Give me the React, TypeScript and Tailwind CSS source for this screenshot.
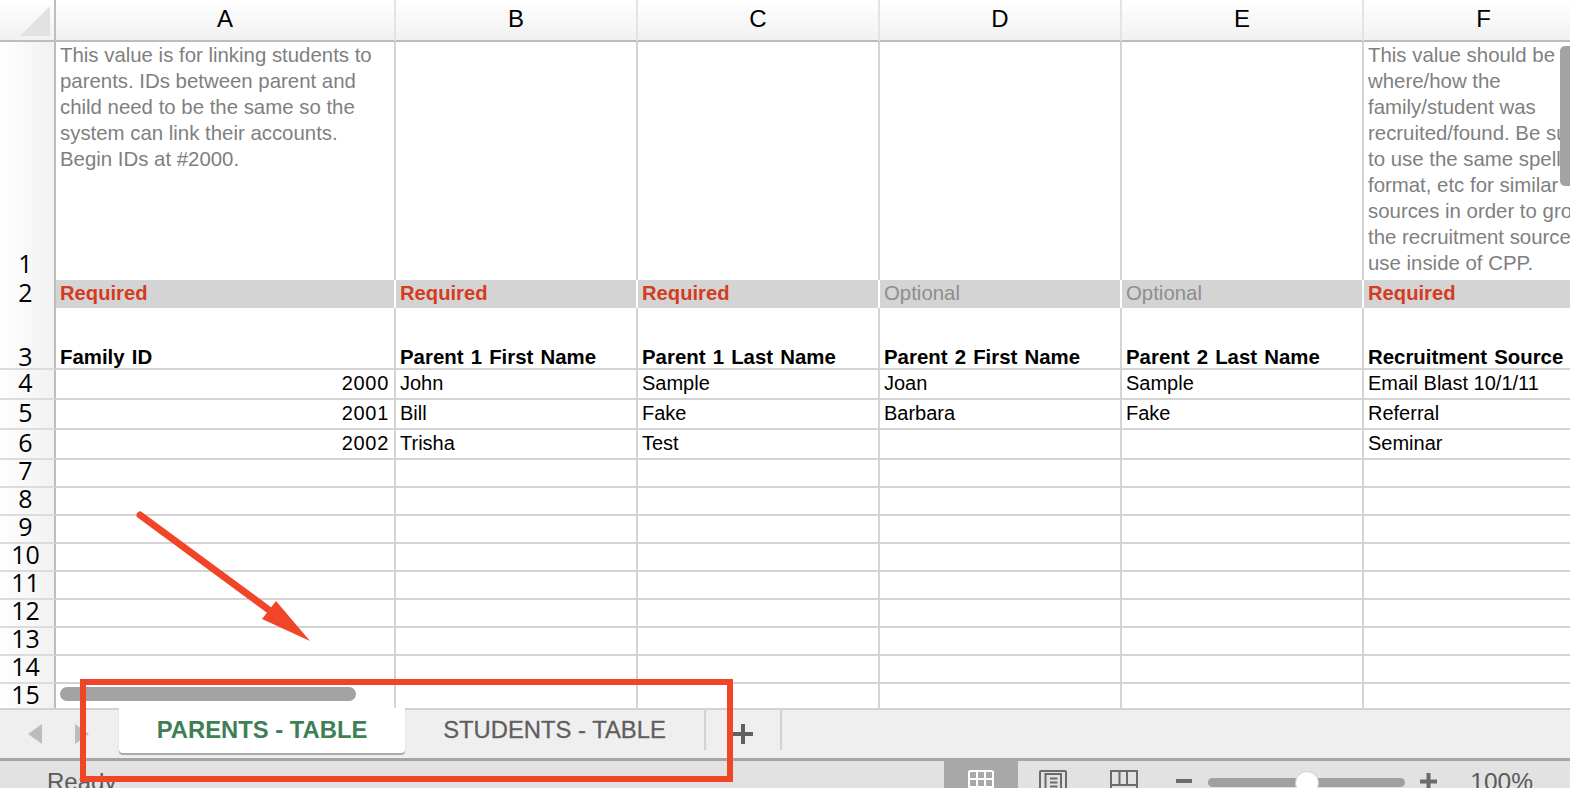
const sans = "font-['Liberation_Sans',Arial,sans-serif]";

const columns = ['A', 'B', 'C', 'D', 'E', 'F'];

const noteA = [
  'This value is for linking students to',
  'parents. IDs between parent and',
  'child need to be the same so the',
  'system can link their accounts.',
  'Begin IDs at #2000.',
];

const noteF = [
  'This value should be',
  'where/how the',
  'family/student was',
  'recruited/found. Be sure',
  'to use the same spelling,',
  'format, etc for similar',
  'sources in order to group',
  'the recruitment sources to',
  'use inside of CPP.',
];

const status = ['Required', 'Required', 'Required', 'Optional', 'Optional', 'Required'];
const titles = [
  'Family ID',
  'Parent 1 First Name',
  'Parent 1 Last Name',
  'Parent 2 First Name',
  'Parent 2 Last Name',
  'Recruitment Source',
];
const people = [
  ['2000', 'John', 'Sample', 'Joan', 'Sample', 'Email Blast 10/1/11'],
  ['2001', 'Bill', 'Fake', 'Barbara', 'Fake', 'Referral'],
  ['2002', 'Trisha', 'Test', '', '', 'Seminar'],
];
const emptyRows = [7, 8, 9, 10, 11, 12, 13, 14, 15];

function RowLabel({
  n,
  line = true,
  leading = 'leading-[32px]',
}: {
  n: number;
  line?: boolean;
  leading?: string;
}) {
  return (
    <div
      className={`flex items-end justify-center border-r-2 border-r-[#bdbdbd] bg-gradient-to-r from-white to-[#f1f1f1] font-['Open_Sans',sans-serif] text-[25px] text-black ${leading} ${
        line ? 'border-b-2 border-b-[#dcdcdc]' : ''
      }`}
    >
      <span className="pr-[3px]">{n}</span>
    </div>
  );
}

function Note({ lines }: { lines: string[] }) {
  return (
    <div className="overflow-hidden whitespace-nowrap border-r-2 border-r-[#d4d4d4] pl-1 text-[20.4px] leading-[26px] text-[#7f7f7f]">
      {lines.map((l) => (
        <div key={l}>{l}</div>
      ))}
    </div>
  );
}

function Sheet() {
  return (
    <div
      className={`relative grid min-h-0 flex-1 grid-cols-[56px_340px_242px_242px_242px_242px_241px] grid-rows-[42px_238px_28px_62px_30px_30px_30px_repeat(8,28px)_24px] overflow-hidden bg-white ${sans}`}
    >
      {/* header row */}
      <div className="flex items-start border-r-2 border-b-2 border-[#bdbdbd] bg-gradient-to-b from-white to-[#f1f1f1] pl-5 pt-1.5">
        <svg width="30" height="30" viewBox="0 0 30 30">
          <path d="M30 0V30H0Z" fill="#e2e2e2" />
        </svg>
      </div>
      {columns.map((c) => (
        <div
          key={c}
          className="flex items-center justify-center border-r-2 border-b-2 border-r-[#e4e4e4] border-b-[#bdbdbd] bg-gradient-to-b from-white to-[#f1f1f1] pb-[2px] text-[24px] text-black"
        >
          {c}
        </div>
      ))}

      {/* row 1 */}
      <RowLabel n={1} line={false} leading="leading-[34px]" />
      <Note lines={noteA} />
      <Note lines={[]} />
      <Note lines={[]} />
      <Note lines={[]} />
      <Note lines={[]} />
      <Note lines={noteF} />

      {/* row 2 */}
      <RowLabel n={2} line={false} />
      {status.map((s, i) => (
        <div
          key={i}
          className={`border-r-2 border-r-white bg-[#d4d4d4] pl-1 leading-[26px] ${
            s === 'Required' ? 'text-[20.2px] font-bold text-[#d43b1f]' : 'text-[20.4px] text-[#8e8e8e]'
          }`}
        >
          {s}
        </div>
      ))}

      {/* row 3 */}
      <RowLabel n={3} leading="leading-[24px]" />
      {titles.map((t) => (
        <div
          key={t}
          className="flex items-end whitespace-nowrap border-r-2 border-b-2 border-[#d4d4d4] pl-1 text-[20.4px] font-bold leading-[22px] text-black [word-spacing:1.5px]"
        >
          {t}
        </div>
      ))}

      {/* rows 4-6 */}
      {people.map((row, r) => (
        <div key={r} className="contents">
          <RowLabel n={r + 4} />
          {row.map((v, i) => (
            <div
              key={i}
              className={`whitespace-nowrap border-r-2 border-b-2 border-[#d4d4d4] text-[20px] leading-[26px] text-black ${
                i === 0 ? 'pr-[5px] text-right tracking-[0.7px]' : 'pl-1'
              }`}
            >
              {v}
            </div>
          ))}
        </div>
      ))}

      {/* empty rows */}
      {emptyRows.map((n) => (
        <div key={n} className="contents">
          <RowLabel n={n} line={n !== 15} leading={n === 15 ? 'leading-[28px]' : 'leading-[32px]'} />
          {columns.map((c) => (
            <div
              key={c}
              className={`border-r-2 border-[#d4d4d4] ${n !== 15 ? 'border-b-2' : ''}`}
            />
          ))}
        </div>
      ))}

      {/* overlay scrollbars */}
      <div className="absolute left-[60px] top-[687px] h-[14px] w-[296px] rounded-full bg-[#a3a3a3]" />
      <div className="absolute right-0 top-[46px] h-[140px] w-[10px] rounded-l-[5px] bg-[#a3a3a3]" />
    </div>
  );
}

function TabBar() {
  return (
    <div className={`flex h-[50px] shrink-0 items-start border-t-2 border-[#d2d2d2] bg-[#efefef] ${sans}`}>
      <div className="flex h-full w-[119px] items-start gap-[33px] pl-[28px] pt-[14px]">
        <svg width="14" height="20" viewBox="0 0 14 20">
          <path d="M14 0V20L0 10Z" fill="#bcbcbc" />
        </svg>
        <svg width="14" height="20" viewBox="0 0 14 20">
          <path d="M0 0V20L14 10Z" fill="#bcbcbc" />
        </svg>
      </div>
      <div className="-mt-[2px] flex h-[45px] w-[286px] items-center justify-center rounded-b-[4px] bg-white pb-[1px] text-[23.8px] font-bold text-[#3f7f56] shadow-[0_2px_1px_#a8a8a8]">
        PARENTS - TABLE
      </div>
      <div className="flex h-[40px] w-[301px] items-center justify-center border-r-2 border-[#d2d2d2] pb-[1px] text-[23.8px] text-[#5f5f5f] [-webkit-text-stroke:0.3px_#5f5f5f]">
        STUDENTS - TABLE
      </div>
      <div className="flex h-[40px] w-[76px] items-center justify-center border-r-2 border-[#d2d2d2] pt-[8px]">
        <svg width="20" height="20" viewBox="0 0 20 20">
          <path d="M8 0h4v8h8v4h-8v8H8v-8H0V8h8Z" fill="#606060" />
        </svg>
      </div>
    </div>
  );
}

function StatusBar() {
  return (
    <div className={`flex h-[30px] shrink-0 items-start border-t-[3px] border-[#a6a6a6] bg-[#e2e2e2] ${sans}`}>
      <span className="ml-[47px] mt-[8px] text-[24px] leading-[26px] text-[#5a5a5a]">Ready</span>
      <div className="ml-auto flex h-full items-start">
        {/* normal view */}
        <div className="flex h-[40px] w-[74px] justify-center bg-[#a8a8a8] pt-[9px]">
          <svg width="26" height="22" viewBox="0 0 26 22">
            <rect x="1" y="1" width="24" height="30" rx="1.5" fill="#a8a8a8" stroke="#fff" strokeWidth="2" />
            <path d="M1 9h24M1 17h24M9 1v21M17 1v21" stroke="#fff" strokeWidth="2" />
          </svg>
        </div>
        {/* page layout */}
        <div className="ml-[21px] mt-[9px]">
          <svg width="28" height="22" viewBox="0 0 28 22">
            <rect x="1" y="1" width="26" height="30" rx="1" fill="none" stroke="#6b6b6b" strokeWidth="2" />
            <path d="M6.500 22V4h15.500v18M11 8.500h7.500M11 12.500h7.500M11 16.500h7.500" fill="none" stroke="#6b6b6b" strokeWidth="2" />
          </svg>
        </div>
        {/* page break */}
        <div className="ml-[43px] mt-[9px]">
          <svg width="28" height="22" viewBox="0 0 28 22">
            <path d="M1 24V1h26v23M9.500 1v14M17 1v14M1 15h26" fill="none" stroke="#6b6b6b" strokeWidth="2" />
          </svg>
        </div>
        <div className="ml-[38px] mt-[18px] h-[4px] w-[16px] bg-[#6b6b6b]" />
        <div className="relative ml-[16px] mt-[17px] h-[9px] w-[197px] rounded-full bg-[#a0a0a0]">
          <div className="absolute left-[87px] top-[-7px] h-[24px] w-[24px] rounded-full border border-[#cfcfcf] bg-white" />
        </div>
        <div className="ml-[15px] mt-[12px]">
          <svg width="17" height="17" viewBox="0 0 17 17">
            <path d="M6.5 0h4v6.500h6.500v4h-6.500v6.500h-4v-6.500H0v-4h6.500Z" fill="#6b6b6b" />
          </svg>
        </div>
        <span className="ml-[33px] mr-[37px] mt-[8px] text-[24.5px] leading-[26px] text-[#5a5a5a]">100%</span>
      </div>
    </div>
  );
}

export default function App() {
  return (
    <div className="relative flex h-[788px] w-full flex-col overflow-hidden bg-white">
      <Sheet />
      <TabBar />
      <StatusBar />

      {/* callout: box round the tabs and the arrow pointing at it */}
      <div className="pointer-events-none absolute left-[80px] top-[679px] h-[103px] w-[653px] border-[6px] border-[#f04527]" />
      <svg className="pointer-events-none absolute left-[130px] top-[505px]" width="190" height="145" viewBox="0 0 190 145">
        <path d="M10 10L139 105" stroke="#f04527" strokeWidth="7" strokeLinecap="round" fill="none" />
        <path d="M180 136L132 114L146 96Z" fill="#f04527" />
      </svg>
    </div>
  );
}
